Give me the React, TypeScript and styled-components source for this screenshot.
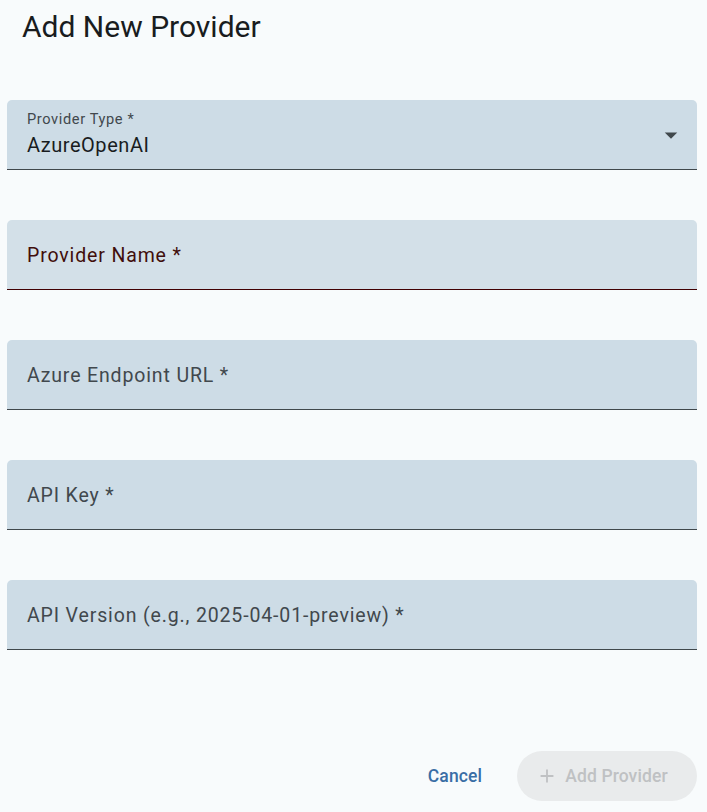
import React from 'react';
import styled, { createGlobalStyle } from 'styled-components';

const GlobalStyle = createGlobalStyle`
  html, body {
    margin: 0;
    padding: 0;
    background: #f8fbfc;
  }

  * {
    box-sizing: border-box;
  }
`;

const Dialog = styled.div`
  width: 707px;
  height: 812px;
  display: flex;
  flex-direction: column;
  background: #f8fbfc;
  font-family: Roboto, 'Liberation Sans', sans-serif;
`;

const Title = styled.h2`
  margin: 0;
  padding: 7px 22px 0;
  height: 47px;
  font-size: 30px;
  font-weight: 400;
  line-height: 40px;
  color: #191c1e;
`;

const Fields = styled.div`
  display: flex;
  flex-direction: column;
  gap: 50px;
  padding: 53px 10px 0 7px;
  flex: 1;
`;

const Field = styled.div<{ $error?: boolean }>`
  position: relative;
  height: 70px;
  border-radius: 5px 5px 0 0;
  background: ${({ $error }) => ($error ? '#d3e0e8' : '#cddce6')};
  border-bottom: 1px solid ${({ $error }) => ($error ? '#410002' : '#40484c')};
`;

const Placeholder = styled.span<{ $error?: boolean }>`
  position: absolute;
  left: 20px;
  top: 0;
  bottom: 0;
  display: flex;
  align-items: center;
  padding-top: 1px;
  font-size: 19.5px;
  letter-spacing: 0.86px;
  color: ${({ $error }) => ($error ? '#410e0b' : '#41484d')};
`;

const SmallLabel = styled.span`
  position: absolute;
  left: 20px;
  top: 9px;
  font-size: 14.6px;
  line-height: 20px;
  letter-spacing: 0.62px;
  color: #41484d;
`;

const Value = styled.span`
  position: absolute;
  left: 20px;
  top: 31px;
  font-size: 20px;
  line-height: 29px;
  letter-spacing: 0.55px;
  color: #191c1e;
`;

const Arrow = styled.svg`
  position: absolute;
  right: 11px;
  top: 20px;
  width: 30px;
  height: 30px;
  fill: #40484c;
`;

const Actions = styled.div`
  display: flex;
  justify-content: flex-end;
  align-items: center;
  gap: 15px;
  padding: 0 10px 11px 0;
`;

const TextButton = styled.button`
  height: 50px;
  padding: 0 20px;
  border: none;
  background: transparent;
  font-family: Roboto, 'Liberation Sans', sans-serif;
  font-size: 17.5px;
  font-weight: 500;
  letter-spacing: 0.1px;
  color: #3a6ea5;
  cursor: pointer;
`;

const FilledButton = styled.button`
  display: flex;
  align-items: center;
  justify-content: center;
  gap: 7px;
  width: 180px;
  height: 50px;
  padding: 0 10px 0 0;
  border: none;
  border-radius: 25px;
  background: #e9ebec;
  font-family: Roboto, 'Liberation Sans', sans-serif;
  font-size: 17.5px;
  font-weight: 500;
  letter-spacing: 0.1px;
  white-space: nowrap;
  color: #bfc1c3;
`;

const PlusIcon = styled.svg`
  width: 22px;
  height: 22px;
  fill: #bfc1c3;
`;

const textFields = [
  { label: 'Provider Name *', error: true },
  { label: 'Azure Endpoint URL *' },
  { label: 'API Key *' },
  { label: 'API Version (e.g., 2025-04-01-preview) *' },
];

export default function App() {
  return (
    <>
      <GlobalStyle />
      <Dialog>
        <Title>Add New Provider</Title>
        <Fields>
          <Field>
            <SmallLabel>Provider Type *</SmallLabel>
            <Value>AzureOpenAI</Value>
            <Arrow viewBox="0 0 24 24">
              <path d="M7 10l5 5 5-5z" />
            </Arrow>
          </Field>
          {textFields.map((f) => (
            <Field key={f.label} $error={f.error}>
              <Placeholder $error={f.error}>{f.label}</Placeholder>
            </Field>
          ))}
        </Fields>
        <Actions>
          <TextButton>Cancel</TextButton>
          <FilledButton disabled>
            <PlusIcon viewBox="0 0 24 24">
              <path d="M19 13h-6v6h-2v-6H5v-2h6V5h2v6h6v2z" />
            </PlusIcon>
            Add Provider
          </FilledButton>
        </Actions>
      </Dialog>
    </>
  );
}
